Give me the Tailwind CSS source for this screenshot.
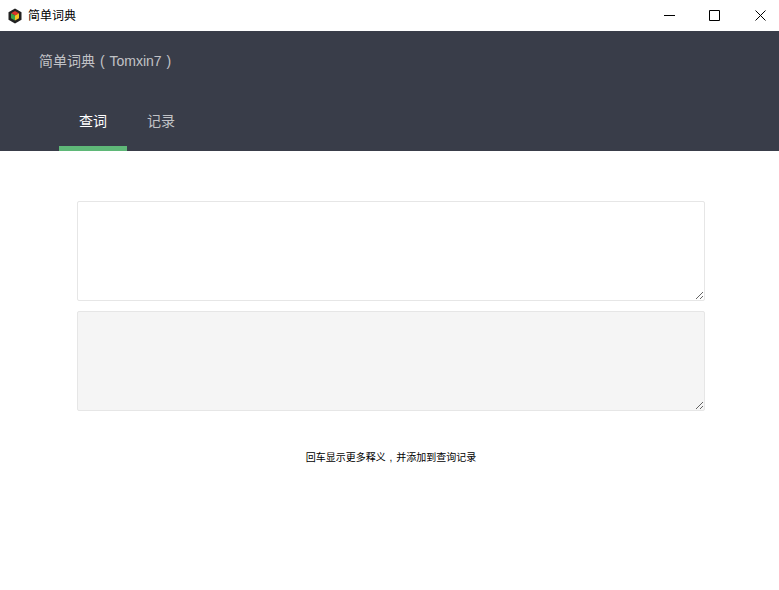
<!DOCTYPE html>
<html lang="zh-CN">
<head>
    <meta charset="UTF-8">
    <meta name="viewport" content="width=device-width, initial-scale=1.0">
    <script src="https://cdn.jsdelivr.net/npm/@tailwindcss/browser@4"></script>
    <title>简单词典</title>
</head>
<body class="h-[590px] overflow-hidden bg-white font-['Liberation_Sans','Noto_Sans_CJK_SC',sans-serif]">
    <!-- Window title bar -->
    <div class="flex h-[31px] items-center bg-white">
        <svg class="ml-[7px] h-4 w-4" viewBox="0 0 16 16">
            <path d="M8 0.5 14.5 4.2v7.6L8 15.5 1.5 11.8V4.2z" fill="#222"/>
            <path d="M8 3 12 5.3 8 7.6 4 5.3z" fill="#d9352b"/>
            <path d="M4 5.3 8 7.6V12.6L4 10.3z" fill="#3ba54a"/>
            <path d="M12 5.3 8 7.6V12.6L12 10.3z" fill="#f2c522"/>
        </svg>
        <span class="ml-[5px] text-xs text-black">简单词典</span>
        <div class="ml-auto mr-[13px] flex items-center">
            <svg class="h-[11px] w-[11px]" viewBox="0 0 11 11"><path d="M0 5.5h11" stroke="#000" fill="none"/></svg>
            <svg class="ml-[34px] h-[11px] w-[11px]" viewBox="0 0 11 11"><path d="M.5.5h10v10H.5z" stroke="#000" fill="none"/></svg>
            <svg class="ml-[35px] h-[11px] w-[11px]" viewBox="0 0 11 11"><path d="M.5.5l10 10M10.5.5l-10 10" stroke="#000" fill="none"/></svg>
        </div>
    </div>
    <!-- Header -->
    <div class="flex h-[120px] flex-col bg-[#393d49]">
        <div class="flex h-[60px] items-center whitespace-pre pl-[39px] text-sm text-white/70 [word-spacing:1px]">简单词典 ( Tomxin7 )</div>
        <div class="flex h-[60px] pl-[59px] text-sm">
            <div class="flex w-[68px] items-center justify-center border-b-[5px] border-[#5fb878] pt-[5px] text-white">查词</div>
            <div class="flex w-[68px] items-center justify-center text-white/70">记录</div>
        </div>
    </div>
    <!-- Main -->
    <div class="flex flex-col pl-[77px] pr-[74px] pt-[50px]">
        <textarea class="block h-[100px] w-full rounded-[2px] border border-[#e6e6e6] bg-white"></textarea>
        <textarea disabled class="mt-[10px] block h-[100px] w-full rounded-[2px] border border-[#e6e6e6] bg-[#f5f5f5]"></textarea>
        <p class="mt-10 text-center text-[10px] leading-[13px] text-black [word-spacing:1px]">回车显示更多释义 , 并添加到查询记录</p>
    </div>
</body>
</html>
